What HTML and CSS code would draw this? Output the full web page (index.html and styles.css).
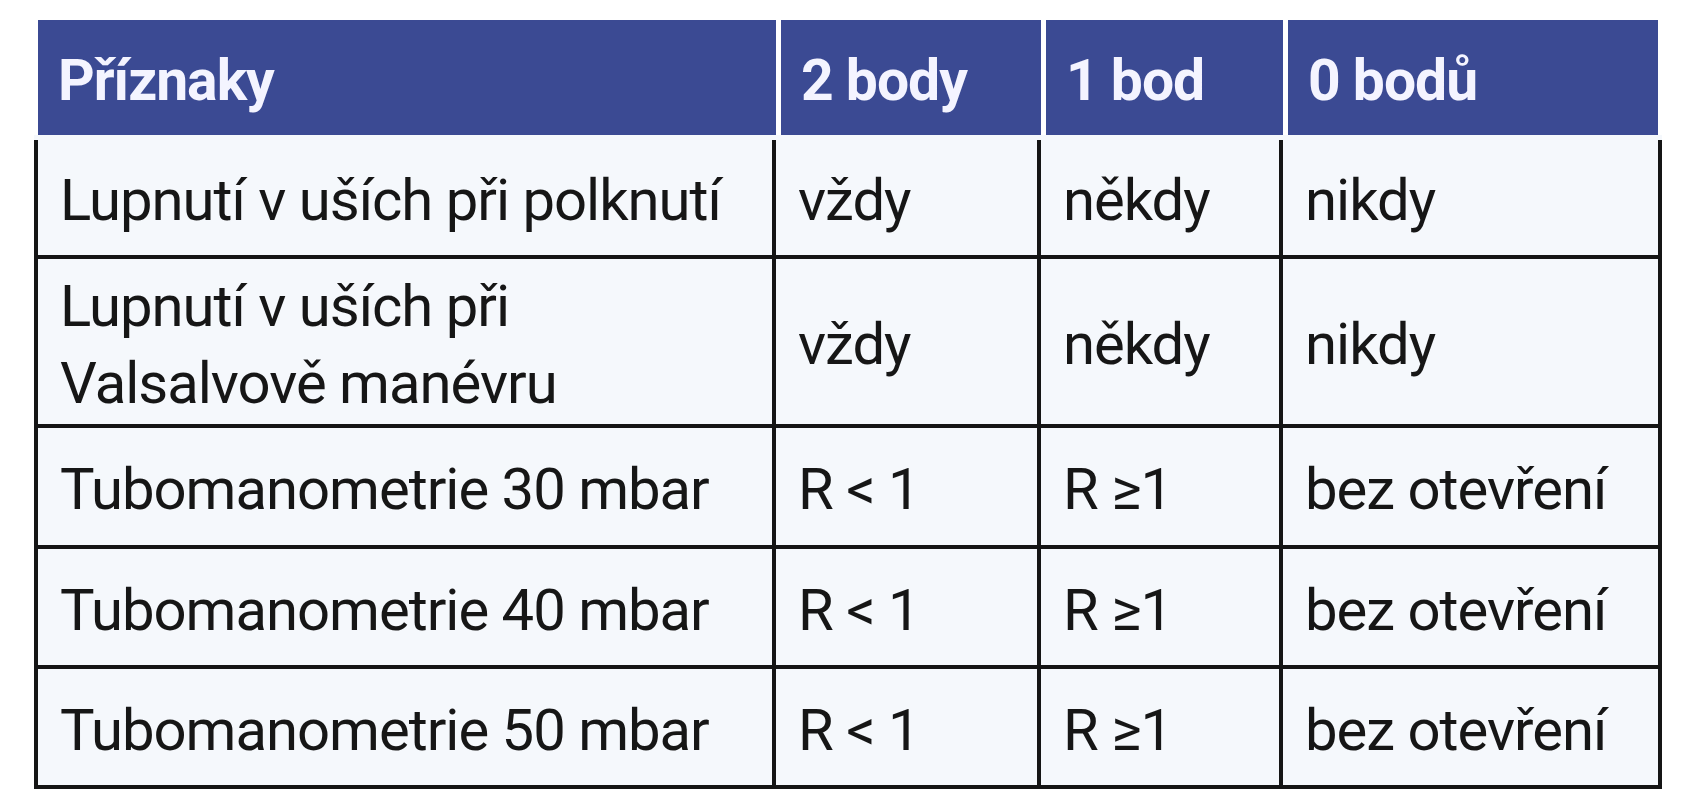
FILE: index.html
```html
<!DOCTYPE html>
<html lang="cs">
<head>
<meta charset="utf-8">
<title>Příznaky</title>
<link rel="stylesheet" href="styles.css">
</head>
<body>
<div class="table">
  <div class="head">
    <div class="hcell c1">Příznaky</div>
    <div class="hcell c2">2 body</div>
    <div class="hcell c3">1 bod</div>
    <div class="hcell c4">0 bodů</div>
  </div>
  <div class="body">
    <div class="row r1">
      <div class="cell c1">Lupnutí v uších při polknutí</div>
      <div class="cell c2">vždy</div>
      <div class="cell c3">někdy</div>
      <div class="cell c4">nikdy</div>
    </div>
    <div class="row r2">
      <div class="cell c1">Lupnutí v uších při<br>Valsalvově manévru</div>
      <div class="cell c2">vždy</div>
      <div class="cell c3">někdy</div>
      <div class="cell c4">nikdy</div>
    </div>
    <div class="row r3">
      <div class="cell c1">Tubomanometrie 30 mbar</div>
      <div class="cell c2">R &lt; 1</div>
      <div class="cell c3">R ≥1</div>
      <div class="cell c4">bez otevření</div>
    </div>
    <div class="row r4">
      <div class="cell c1">Tubomanometrie 40 mbar</div>
      <div class="cell c2">R &lt; 1</div>
      <div class="cell c3">R ≥1</div>
      <div class="cell c4">bez otevření</div>
    </div>
    <div class="row r5">
      <div class="cell c1">Tubomanometrie 50 mbar</div>
      <div class="cell c2">R &lt; 1</div>
      <div class="cell c3">R ≥1</div>
      <div class="cell c4">bez otevření</div>
    </div>
  </div>
</div>
</body>
</html>
```
FILE: styles.css
```css
html, body {
  margin: 0;
  padding: 0;
  background: #ffffff;
}
body {
  font-family: Roboto, "Liberation Sans", sans-serif;
  padding: 20px 0 0 34px;
}
.table {
  width: 1628px;
}
.head {
  display: flex;
  gap: 5px;
  margin: 0 4px;
  height: 115px;
  background: #ffffff;
}
.hcell {
  background: #3b4a93;
  color: #f4f4ff;
  font-weight: 700;
  font-size: 57px;
  letter-spacing: -1px;
  display: flex;
  align-items: center;
  padding: 6px 0 0 20px;
  box-sizing: border-box;
}
.head .c1 { width: 738px; }
.head .c2 { width: 260px; }
.head .c3 { width: 237px; }
.head .c4 { width: 370px; }

.body {
  background: #f5f8fc;
  padding-top: 5px;
}
.row {
  display: grid;
  grid-template-columns: 742px 265px 242px 379px;
  border-bottom: 4px solid #151515;
}
.r1 { height: 115px; }
.r2 { height: 165px; }
.r3 { height: 117px; }
.r4 { height: 116px; }
.r5 { height: 116px; }
.cell {
  font-size: 58px;
  letter-spacing: -1px;
  line-height: 77px;
  color: #161616;
  display: flex;
  align-items: center;
  padding: 6px 0 0 22px;
  box-sizing: border-box;
  border-right: 4px solid #151515;
}
.cell.c1 {
  border-left: 4px solid #151515;
  padding-left: 22px;
}
```
